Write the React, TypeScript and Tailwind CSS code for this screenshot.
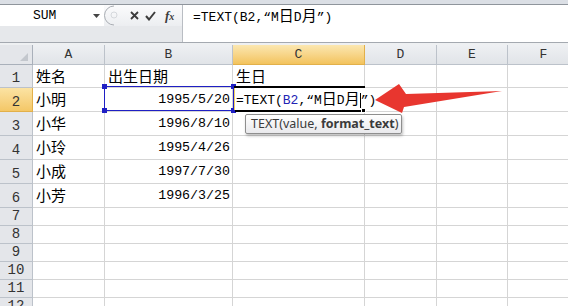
import React from "react";

const MONO = "font-['Liberation_Mono','Noto_Sans_CJK_SC',monospace]";
const CJK = "font-['Noto_Sans_CJK_SC',sans-serif]";

const COLS = [
  { key: "A", w: "w-[72px]" },
  { key: "B", w: "w-[128px]" },
  { key: "C", w: "w-[132px]" },
  { key: "D", w: "w-[72px]" },
  { key: "E", w: "w-[71px]" },
  { key: "F", w: "w-[72px]" },
];

interface Row {
  n: number;
  h: string;
  a?: string;
  b?: string;
  c?: string;
}

const ROWS: Row[] = [
  { n: 1, h: "h-[23px]", a: "姓名", b: "出生日期", c: "生日" },
  { n: 2, h: "h-[24px]", a: "小明", b: "1995/5/20" },
  { n: 3, h: "h-[24px]", a: "小华", b: "1996/8/10" },
  { n: 4, h: "h-[24px]", a: "小玲", b: "1995/4/26" },
  { n: 5, h: "h-[24px]", a: "小成", b: "1997/7/30" },
  { n: 6, h: "h-[24px]", a: "小芳", b: "1996/3/25" },
  { n: 7, h: "h-[18px]" },
  { n: 8, h: "h-[18px]" },
  { n: 9, h: "h-[18px]" },
  { n: 10, h: "h-[18px]" },
  { n: 11, h: "h-[18px]" },
  { n: 12, h: "h-[18px]" },
];

function CellText({ value }: { value?: string }) {
  if (!value) return null;
  const isDate = /^[0-9/]+$/.test(value);
  if (isDate) {
    return (
      <span className={`${MONO} text-[13.3px] ml-auto pr-[2px] text-black`}>{value}</span>
    );
  }
  return <span className={`${CJK} text-[15px] pl-[3px] text-black`}>{value}</span>;
}

function FormulaBar() {
  return (
    <div className="flex h-[37px]">
      <div className="w-[183px] flex flex-col">
        <div className="h-[21px] flex">
          <div className="w-[104px] bg-white flex items-center">
            <span className={`${MONO} text-[13px] text-black ml-[33px]`}>SUM</span>
            <svg className="ml-auto mr-[4px]" width="7" height="4" viewBox="0 0 7 4">
              <polygon points="0,0 7,0 3.5,4" fill="#444" />
            </svg>
          </div>
          <div className="flex-1 flex items-center bg-gradient-to-b from-[#fbfbfc] to-[#eceef1] border-r border-[#b9bdc3]">
            <svg width="14" height="21" viewBox="0 0 14 21">
              <path d="M10 1 A9 9 0 0 0 10 20" fill="none" stroke="#a9adb3" strokeWidth="1" />
              <circle cx="10" cy="10" r="3" fill="none" stroke="#d5d8dc" strokeWidth="1" />
            </svg>
            <svg className="ml-[12px]" width="9" height="9" viewBox="0 0 9 9">
              <path d="M1 1 L8 8 M8 1 L1 8" stroke="#3c3c3c" strokeWidth="1.8" />
            </svg>
            <svg className="ml-[6px]" width="11" height="10" viewBox="0 0 11 10">
              <path d="M1 5 L4 8.5 L10 1" fill="none" stroke="#3c3c3c" strokeWidth="2" />
            </svg>
            <span className="ml-[9px] font-['Liberation_Serif',serif] italic font-bold text-[13px] text-[#3c3c3c] leading-none">
              f<span className="text-[10px]">x</span>
            </span>
          </div>
        </div>
        <div className="flex-1 bg-[#e6e8eb] border-r border-[#b9bdc3]" />
      </div>
      <div className="flex-1 bg-white pl-[10px] leading-[20px]">
        <span className={`${MONO} text-[13px] text-black`}>
          =TEXT(B2,“M<span className={`${CJK} text-[15px]`}>日</span>D
          <span className={`${CJK} text-[15px]`}>月</span>”)
        </span>
      </div>
    </div>
  );
}

function HeaderRow() {
  return (
    <div className="flex h-[20px]">
      <div className="w-[33px] shrink-0 bg-[#e4e6ea] border-r border-b border-[#a9b0ba] flex items-end justify-end pr-[4px] pb-[3px]">
        <svg width="8" height="8" viewBox="0 0 8 8">
          <polygon points="8,0 8,8 0,8" fill="#c3c7cd" />
        </svg>
      </div>
      {COLS.map((c) => (
        <div
          key={c.key}
          className={`${c.w} shrink-0 flex items-center justify-center border-r border-b ${
            c.key === "C"
              ? "bg-gradient-to-b from-[#fbe7b0] to-[#f3c35c] border-[#e2b04a]"
              : "bg-gradient-to-b from-[#eef0f3] to-[#e1e4e8] border-[#bcc2ca]"
          }`}
        >
          <span className={`${MONO} text-[13px] text-[#333]`}>{c.key}</span>
        </div>
      ))}
    </div>
  );
}

function SheetRow({ row }: { row: Row }) {
  const active = row.n === 2;
  return (
    <div className={`flex ${row.h}`}>
      <div
        className={`w-[33px] shrink-0 flex items-end justify-center pb-[1px] border-r border-b ${
          active
            ? "bg-gradient-to-b from-[#fbe3a3] to-[#f4c766] border-[#e2b04a]"
            : "bg-[#e4e6ea] border-[#bcc2ca]"
        }`}
      >
        <span className={`${MONO} text-[14px] text-[#333] leading-[16px]`}>{row.n}</span>
      </div>
      {COLS.map((c) => (
        <div
          key={c.key}
          className={`${c.w} shrink-0 flex items-center border-r border-b border-[#d5d5d5]`}
        >
          {c.key === "A" && <CellText value={row.a} />}
          {c.key === "B" && <CellText value={row.b} />}
          {c.key === "C" && <CellText value={row.c} />}
        </div>
      ))}
    </div>
  );
}

export default function App() {
  return (
    <div className="relative w-[568px] h-[306px] overflow-hidden bg-white">
      <div className="h-[5px] bg-[#dbdfe5] border-b border-[#8f959c]" />
      <FormulaBar />
      <div className="h-[3px] bg-[#eef0f2] border-t border-[#a4a9b0]" />

      <div className="flex flex-col">
        <HeaderRow />
        {ROWS.map((r) => (
          <SheetRow key={r.n} row={r} />
        ))}
      </div>

      {/* range finder on B2 */}
      <div className="absolute left-[104px] top-[86px] w-[130px] h-[25px] border border-[#1f1fc4]">
        <div className="absolute -left-[3px] -top-[3px] w-[5px] h-[5px] bg-[#1f1fc4]" />
        <div className="absolute -right-[3px] -top-[3px] w-[5px] h-[5px] bg-[#1f1fc4]" />
        <div className="absolute -left-[3px] -bottom-[3px] w-[5px] h-[5px] bg-[#1f1fc4]" />
        <div className="absolute -right-[3px] -bottom-[3px] w-[5px] h-[5px] bg-[#1f1fc4]" />
      </div>

      {/* in-cell editor on C2 */}
      <div className="absolute left-[234px] top-[88px] w-[140px] h-[22px] bg-white flex items-center border-l border-[#f0d060]">
        <span className={`${MONO} text-[13px] text-black pl-[1px] whitespace-nowrap`}>
          =TEXT(<span className="text-[#2323b4]">B2</span>,“M
          <span className={`${CJK} text-[15px]`}>日</span>D
          <span className={`${CJK} text-[15px]`}>月</span>
          <span className="inline-block w-px h-[15px] bg-black align-middle" />”)
        </span>
      </div>
      <div className="absolute left-[234px] top-[86px] w-[131px] h-[2px] bg-black" />
      <div className="absolute left-[235px] top-[110px] w-[126px] h-[2px] bg-black" />
      <div className="absolute left-[361px] top-[108px] w-[5px] h-[5px] bg-black border border-white" />

      {/* function tooltip */}
      <div className="absolute left-[245px] top-[114px] w-[157px] h-[20px] rounded-[2px] border border-[#8e8e8e] bg-gradient-to-b from-white to-[#e9e9ec] shadow-[1px_2px_3px_rgba(0,0,0,0.25)] flex items-center pl-[5px]">
        <span className="font-['Noto_Sans',sans-serif] text-[12.5px] text-[#3b3b3b] whitespace-nowrap">
          TEXT(value, <span className="font-bold">format_text</span>)
        </span>
      </div>

      {/* red arrow */}
      <svg className="absolute left-[370px] top-[80px]" width="140" height="40" viewBox="0 0 140 40">
        <polygon points="5,20 29,4 36,14 132,11 34,27 32,33" fill="#e8362f" />
      </svg>
    </div>
  );
}
